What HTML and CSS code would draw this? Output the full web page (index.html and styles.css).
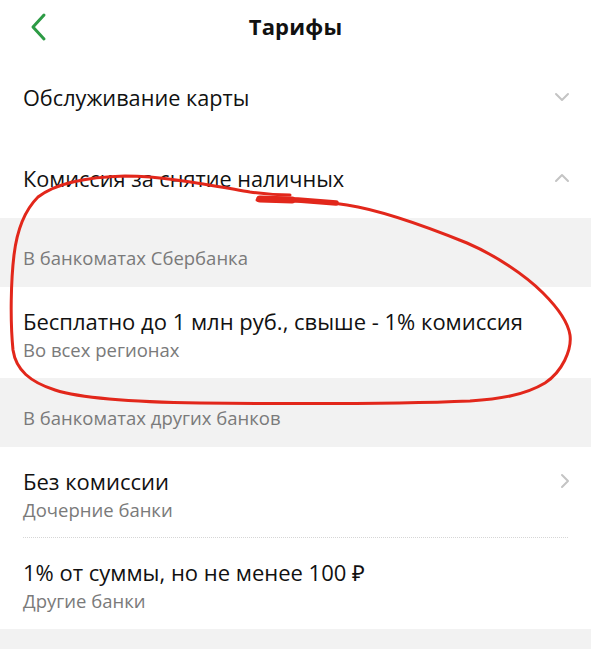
FILE: index.html
```
<!DOCTYPE html>
<html lang="ru">
<head>
  <meta charset="UTF-8">
  <meta name="viewport" content="width=device-width, initial-scale=1.0">
  <title>Тарифы</title>
  <link rel="stylesheet" href="styles.css">
</head>
<body>

  <div class="header">
    <svg class="back" width="20" height="30" viewBox="0 0 20 30">
      <path d="M15 3 L4 15 L15 27" fill="none" stroke="#2d9b45" stroke-width="3" stroke-linecap="round" stroke-linejoin="round"/>
    </svg>
    <p class="title">Тарифы</p>
  </div>

  <div class="acc-row">
    <span>Обслуживание карты</span>
    <svg class="chev" width="16" height="10" viewBox="0 0 16 10">
      <path d="M2 2 L8 8 L14 2" fill="none" stroke="#c4c4c4" stroke-width="2" stroke-linecap="round" stroke-linejoin="round"/>
    </svg>
  </div>

  <div class="acc-row">
    <span>Комиссия за снятие наличных</span>
    <svg class="chev" width="16" height="10" viewBox="0 0 16 10">
      <path d="M2 8 L8 2 L14 8" fill="none" stroke="#c4c4c4" stroke-width="2" stroke-linecap="round" stroke-linejoin="round"/>
    </svg>
  </div>

  <div class="group-label">В банкоматах Сбербанка</div>

  <div class="item">
    <div class="item-text">
      <p class="main">Бесплатно до 1 млн руб., свыше - 1% комиссия</p>
      <p class="sub">Во всех регионах</p>
    </div>
  </div>

  <div class="group-label">В банкоматах других банков</div>

  <div class="item with-line">
    <div class="item-text">
      <p class="main">Без комиссии</p>
      <p class="sub">Дочерние банки</p>
    </div>
    <svg class="chev-right" width="10" height="16" viewBox="0 0 10 16">
      <path d="M2 2 L8 8 L2 14" fill="none" stroke="#c4c4c4" stroke-width="2" stroke-linecap="round" stroke-linejoin="round"/>
    </svg>
  </div>

  <div class="item">
    <div class="item-text">
      <p class="main">1% от суммы, но не менее 100 ₽</p>
      <p class="sub">Другие банки</p>
    </div>
  </div>

  <div class="bottom-band"></div>

  <!-- red marker circle drawn over the screenshot -->
  <svg class="marker" width="591" height="649" viewBox="0 0 591 649">
    <path d="M257 200 C280 200, 320 201, 347 205 C380 210, 430 228, 467 243 C495 255, 525 275, 543 293 C556 306, 568 322, 570 335 C572 350, 562 372, 545 383 C525 395, 500 399, 470 401 C400 404, 300 404, 200 403 C130 402, 80 398, 55 390 C30 382, 16 370, 13 350 C10 320, 11 280, 14 255 C17 230, 25 210, 38 197 C55 184, 85 177, 125 176 C165 176, 215 186, 250 192 C265 194, 278 195, 290 195" fill="none" stroke="#e2271b" stroke-width="3" stroke-linecap="round"/>
    <path d="M259 199 L298 200 L336 203" fill="none" stroke="#e2271b" stroke-width="5.5" stroke-linecap="round" stroke-linejoin="round"/>
    <path d="M260 199 L292 200" stroke="#e2271b" stroke-width="7" stroke-linecap="round"/>
  </svg>

</body>
</html>
```

FILE: styles.css
```
body {
  margin: 0;
  background-color: #fff;
  color: #111;
  font-family: "Open Sans", Arial, sans-serif;
  position: relative;
  width: 591px;
  height: 649px;
  overflow: hidden;
}

p {
  margin: 0;
}

.header {
  height: 56px;
  display: flex;
  align-items: center;
  justify-content: center;
  position: relative;
}

.back {
  position: absolute;
  left: 29px;
  top: 12px;
}

.title {
  font-size: 22px;
  font-weight: bold;
  letter-spacing: 0.2px;
  margin-bottom: 5px;
}

.acc-row {
  height: 80px;
  padding: 0 21px 0 23px;
  display: flex;
  align-items: center;
  justify-content: space-between;
  font-size: 21.7px;
}

.acc-row:nth-of-type(2) {
  height: 82px;
}

.group-label {
  height: 69px;
  box-sizing: border-box;
  padding: 28px 23px 0;
  background-color: #f2f2f2;
  color: #7a7a7a;
  font-size: 18.5px;
  line-height: 24px;
}

.item {
  height: 91px;
  box-sizing: border-box;
  padding: 21px 21px 0 23px;
  display: flex;
  justify-content: space-between;
  align-items: flex-start;
}

.with-line {
  position: relative;
}

.with-line::after {
  content: "";
  position: absolute;
  left: 23px;
  right: 23px;
  bottom: 0;
  border-bottom: 1px dotted #d6d6d6;
}

.main {
  font-size: 22px;
  line-height: 26px;
}

.sub {
  margin-top: 4px;
  font-size: 18.5px;
  line-height: 24px;
  color: #7a7a7a;
}

.chev-right {
  margin-top: 5px;
}

.bottom-band {
  height: 40px;
  background-color: #f2f2f2;
}

.marker {
  position: absolute;
  left: 0;
  top: 0;
  pointer-events: none;
}
```
